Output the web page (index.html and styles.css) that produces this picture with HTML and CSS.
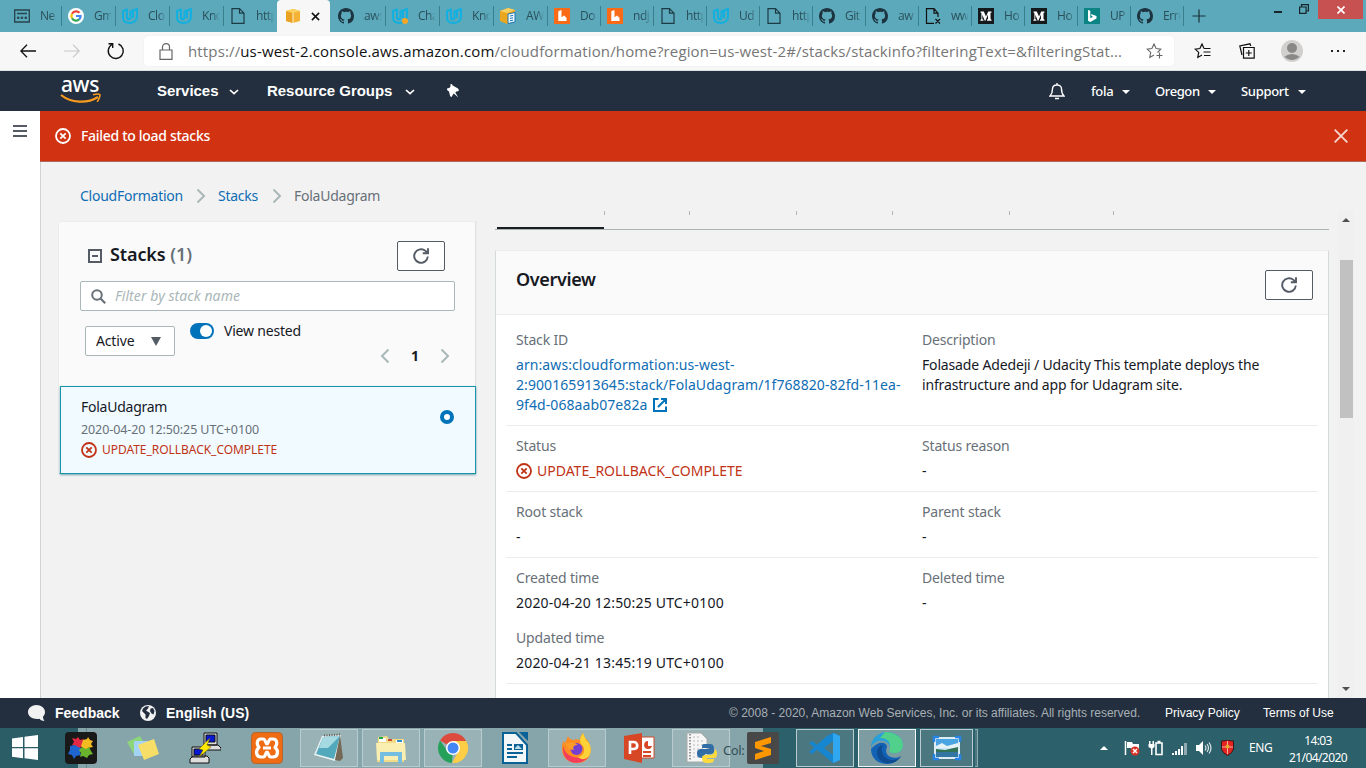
FILE: index.html
```html
<!DOCTYPE html>
<html lang="en">
<head>
<meta charset="utf-8">
<title>CloudFormation - Stack FolaUdagram</title>
<link rel="stylesheet" href="styles.css">
</head>
<body>
<svg class="defs" aria-hidden="true">
  <symbol id="github" viewBox="0 0 16 16"><path fill="#1d3440" d="M8 0C3.58 0 0 3.58 0 8c0 3.54 2.29 6.53 5.47 7.59.4.07.55-.17.55-.38 0-.19-.01-.82-.01-1.49-2.01.37-2.53-.49-2.69-.94-.09-.23-.48-.94-.82-1.13-.28-.15-.68-.52-.01-.53.63-.01 1.08.58 1.23.82.72 1.21 1.87.87 2.33.66.07-.52.28-.87.51-1.07-1.78-.2-3.64-.89-3.64-3.95 0-.87.31-1.59.82-2.15-.08-.2-.36-1.02.08-2.12 0 0 .67-.21 2.2.82A7.7 7.7 0 018 3.86c.68 0 1.36.09 2 .27 1.53-1.04 2.2-.82 2.2-.82.44 1.1.16 1.92.08 2.12.51.56.82 1.27.82 2.15 0 3.07-1.87 3.75-3.65 3.95.29.25.54.73.54 1.48 0 1.07-.01 1.93-.01 2.2 0 .21.15.46.55.38A8 8 0 0016 8c0-4.42-3.58-8-8-8z"/></symbol>
  <symbol id="page" viewBox="0 0 16 16"><path fill="none" stroke="#1d3b45" stroke-width="1.2" d="M2 .7h7.5L14 5.200V15.300H2zM9.500.7v4.500H14"/></symbol>
  <symbol id="udacity" viewBox="0 0 16 16"><path fill="none" stroke="#12b0e0" stroke-width="2" stroke-linejoin="round" d="M1 3l4-1.500V9c0 3 3.500 3 3.500 0V3.500L15 1v7.500c0 4.500-4 6.500-7.500 6.500C3.500 15 1 13 1 9.500zM11 3v7"/></symbol>
  <symbol id="lucid" viewBox="0 0 16 16"><path fill="#fa6b18" d="M0 0h16v16H0z"/><path fill="#fff" d="M4.300 3.300L7.500 2v7.200l2.500-1.700 2.500 2.200v3.300H4.300z"/></symbol>
  <symbol id="medium" viewBox="0 0 16 16"><path fill="#14191b" d="M0 0h16v16H0z"/><path fill="#fff" d="M2.500 3.500h3.300L8 8.500l2.200-5h3.300v1l-1 .6v6l1 .6v1H9v-1l1-.6V6.500l-2.600 6.200h-.6L4.300 6.700V11l1.100 1v.7h-3V12l1-1V5l-.9-.6z"/></symbol>
  <symbol id="failed" viewBox="0 0 16 16"><g fill="none" stroke="currentColor" stroke-width="1.800"><circle cx="8" cy="8" r="7"/><path d="M5.300 5.300l5.400 5.400M10.700 5.300l-5.400 5.400"/></g></symbol>
  <symbol id="refresh" viewBox="0 0 16 16"><path fill="none" stroke="#545b64" stroke-width="1.900" d="M14.800 8.500A6.800 6.800 0 1 1 12.500 2.900l2 2M15 .3v5H9.800"/></symbol>
  <symbol id="chev" viewBox="0 0 10 16"><path fill="none" stroke="#aab7b8" stroke-width="2" d="M1.500 1.500L8 8l-6.500 6.500"/></symbol>
  <symbol id="caret" viewBox="0 0 10 6"><path fill="none" stroke="#fff" stroke-width="1.700" d="M1 1l4 3.700L9 1"/></symbol>
  <symbol id="star" viewBox="0 0 18 16"><path fill="none" stroke="currentColor" stroke-width="1.100" d="M11.500 9.500l3.300-3.400-4.700-.6L8 1 5.900 5.500l-4.700.6 3.500 3.300-.9 5L8 12"/></symbol>
</svg>
<div class="screen">
  <header class="tabs">
    <div class="tab"><svg class="fav" viewBox="0 0 16 16"><path fill="none" stroke="#27434c" stroke-width="1.300" d="M.7 2h14.600v12H.7zM3 5.500h10"/><path fill="none" stroke="#27434c" d="M3.500 9h1.500v1.500H3.500zM7.200 9h1.500v1.500H7.200zM11 9h1.500v1.500H11z"/></svg><span>Ne</span></div>
    <div class="tab"><svg class="fav" viewBox="0 0 16 16"><circle cx="8" cy="8" r="8" fill="#fff"/><g fill="none" stroke-width="2.200"><path stroke="#ea4335" d="M4 5.800a4.600 4.600 0 0 1 7.500-1"/><path stroke="#fbbc05" d="M4 10.300a4.600 4.600 0 0 1 0-4.500"/><path stroke="#34a853" d="M11.300 11.300A4.600 4.600 0 0 1 4 10.300"/><path stroke="#4285f4" d="M8 8h4.600a4.600 4.600 0 0 1-1.400 3.400"/></g></svg><span>Gm</span></div>
    <div class="tab"><svg class="fav"><use href="#udacity"/></svg><span>Clo</span></div>
    <div class="tab"><svg class="fav"><use href="#udacity"/></svg><span>Kno</span></div>
    <div class="tab"><svg class="fav"><use href="#page"/></svg><span>http</span></div>
    <div class="tab active"><svg class="fav" viewBox="0 0 16 16"><path fill="#f5b335" d="M1 3l7-2 7 2v10l-7 2-7-2z"/><path fill="#e9a224" d="M1 3l7 2v10l-7-2z"/><path fill="#fbd05c" d="M1 3l7-2 7 2-7 2z"/><path stroke="#fff3d0" d="M8 5v10"/></svg><svg class="x" viewBox="0 0 10 10"><path stroke="#111" stroke-width="1.700" d="M1 1l8 8M9 1L1 9"/></svg></div>
    <div class="tab"><svg class="fav"><use href="#github"/></svg><span>aws</span></div>
    <div class="tab"><svg class="fav" viewBox="0 0 16 16"><use href="#udacity"/><circle cx="13" cy="13" r="3" fill="#f5a623"/></svg><span>Cha</span></div>
    <div class="tab"><svg class="fav"><use href="#udacity"/></svg><span>Kno</span></div>
    <div class="tab"><svg class="fav" viewBox="0 0 16 16"><path fill="#e9a820" d="M0 3l8-3 7 2v11l-8 3-7-3z"/><path fill="#f9cf60" d="M0 3l8-3 7 2-8 3z"/><path fill="#eef8ff" stroke="#1b76b5" d="M8 6l7-1.500v9.500L8 15.500z"/><path stroke="#1b76b5" d="M10 8l3-.6M10 10.400l3-.6M10 12.800l3-.6"/></svg><span>AW</span></div>
    <div class="tab short"><svg class="fav"><use href="#lucid"/></svg><span>Do</span></div>
    <div class="tab short"><svg class="fav"><use href="#lucid"/></svg><span>ndj</span></div>
    <div class="tab short"><svg class="fav"><use href="#page"/></svg><span>http</span></div>
    <div class="tab short"><svg class="fav"><use href="#udacity"/></svg><span>Ud</span></div>
    <div class="tab short"><svg class="fav"><use href="#page"/></svg><span>http</span></div>
    <div class="tab short"><svg class="fav"><use href="#github"/></svg><span>Git</span></div>
    <div class="tab short"><svg class="fav"><use href="#github"/></svg><span>aw</span></div>
    <div class="tab short"><svg class="fav" viewBox="0 0 16 16"><path fill="none" stroke="#111" stroke-width="1.200" d="M9 15.300H1.500V.7H9l4 4.500V9M9 .7v4.500h4M10.500 11l4.500 4.500M15 11l-4.500 4.500"/></svg><span>ww</span></div>
    <div class="tab short"><svg class="fav"><use href="#medium"/></svg><span>Ho</span></div>
    <div class="tab short"><svg class="fav"><use href="#medium"/></svg><span>Ho</span></div>
    <div class="tab short"><svg class="fav" viewBox="0 0 16 16"><path fill="#0c8484" d="M0 0h16v16H0z"/><path fill="#fff" d="M4 2l2.300.8v7.400l2.700-1.500-1.400-.7-.8-2L12.500 8v2.500L6.300 14 4 12.700z"/></svg><span>UP</span></div>
    <div class="tab short"><svg class="fav"><use href="#github"/></svg><span>Erro</span></div>
    <svg class="plus" viewBox="0 0 14 14"><path stroke="#1b3138" stroke-width="1.200" d="M7 .5v13M.5 7h13"/></svg>
    <div class="win">
      <svg class="min" viewBox="0 0 8 2"><path fill="#16262b" d="M0 0h8v2H0z"/></svg>
      <svg class="max" viewBox="0 0 10 10"><path fill="none" stroke="#16262b" stroke-width="1.200" d="M.6 3h6.500v6.400H.6zM2.500 3V.7h6.900V7H7"/></svg>
      <div class="close"><svg viewBox="0 0 8 8"><path stroke="#fff" stroke-width="1.700" d="M.5.5l7 7M7.500.5l-7 7"/></svg></div>
    </div>
  </header>

  <div class="toolbar">
    <svg class="back" viewBox="0 0 16 14"><path fill="none" stroke="#111" stroke-width="1.300" d="M16 7H1M7 .7L.8 7 7 13.300"/></svg>
    <svg class="fwd" viewBox="0 0 16 14"><path fill="none" stroke="#c9c9c9" stroke-width="1.200" d="M0 7h15M9 .7L15.200 7 9 13.300"/></svg>
    <svg class="reload" viewBox="0 0 18 18"><path fill="none" stroke="#111" stroke-width="1.400" d="M11.500 2A7.500 7.500 0 1 1 5 2.500M1.500 1.800h4.200V6"/></svg>
    <div class="address">
      <svg class="lock" viewBox="0 0 14 17"><path fill="none" stroke="#666" stroke-width="1.200" d="M1 7h12v9.300H1zM3.500 7V4a3.500 3.300 0 0 1 7 0v3"/></svg>
      <span class="url">https://<b>us-west-2.console.aws.amazon.com</b>/cloudformation/home?region=us-west-2#/stacks/stackinfo?filteringText=&amp;filteringStat...</span>
      <svg class="fav-add" viewBox="0 0 18 16"><use href="#star" width="18" height="16"/><path stroke="currentColor" stroke-width="1.100" d="M10.500 12.500h6M13.500 9.500v6"/></svg>
    </div>
    <svg class="favs" viewBox="0 0 18 16"><path fill="none" stroke="#111" stroke-width="1.200" d="M10 5.500L8 1 5.900 5.500l-4.700.6 3.500 3.300-.9 5L8 12M10 5.500h6.500M9.500 9h7M10 12.500h6.500"/></svg>
    <svg class="coll" viewBox="0 0 16 16"><path fill="none" stroke="#111" stroke-width="1.200" d="M4.500 4.500h10.700v10.700H4.500zM3 12L.8 3 11 .8l.8 2.200M9.800 7v6M6.800 10h6"/></svg>
    <svg class="avatar" viewBox="0 0 22 22"><circle cx="11" cy="11" r="11" fill="#d2d0ce"/><circle cx="11" cy="8" r="5" fill="#8a8886"/><path fill="#8a8886" d="M3.500 16.500q7.500-5 15 0A10 10 0 0 1 3.500 16.500z"/></svg>
    <svg class="dots" viewBox="0 0 14 2"><path fill="#222" d="M0 0h2v2H0zM6 0h2v2H6zM12 0h2v2h-2z"/></svg>
  </div>

  <nav class="awsnav">
    <div class="logo"><span>aws</span><svg viewBox="0 0 42 11"><path fill="none" stroke="#f79a1f" stroke-width="2.200" d="M1 2c10 8 26 9 37 2"/><path fill="none" stroke="#f79a1f" stroke-width="1.600" d="M33 1.800c4-1 7-1 7 0s-1 5-3 7"/></svg></div>
    <div class="main services">Services<svg><use href="#caret"/></svg></div>
    <div class="main groups">Resource Groups<svg><use href="#caret"/></svg></div>
    <svg class="pin" viewBox="0 0 12 14"><path fill="#fff" d="M3.500 0L5 .3l.7 1.300 5.300 2.800 1 1.800-1 1-1.700.2-1 1.200 3 5-4.500-4-1.200 1.500L5 12.600l-.9.400-1-1L2 7.500 0 6l.3-1.700 2-.3 1.200-1.500z"/></svg>
    <svg class="bell" viewBox="0 0 16 17"><path fill="none" stroke="#fff" stroke-width="1.400" d="M1 13c2-2 2.500-4 2.500-7C3.500 3.500 5.500 2 8 2s4.500 1.500 4.500 4c0 3 .5 5 2.500 7zM8 0v2M6 15.500h4"/></svg>
    <div class="menu m1">fola<i></i></div>
    <div class="menu m2">Oregon<i></i></div>
    <div class="menu m3">Support<i></i></div>
  </nav>

  <div class="workspace">
    <aside class="rail"><svg viewBox="0 0 14 12"><path fill="#545b64" d="M0 0h14v2H0zM0 5h14v2H0zM0 10h14v2H0z"/></svg></aside>
    <div class="console">
      <div class="flash"><svg class="ic"><use href="#failed"/></svg><span>Failed to load stacks</span><svg class="dismiss" viewBox="0 0 14 14"><path stroke="#f6d5cf" stroke-width="1.900" d="M.7.7l12.600 12.600M13.300.7L.7 13.300"/></svg></div>
      <div class="crumbs"><a class="c1">CloudFormation</a><svg><use href="#chev"/></svg><a class="c2">Stacks</a><svg><use href="#chev"/></svg><span>FolaUdagram</span></div>
      <div class="split">
        <section class="stacks">
          <div class="stacks-head"><svg class="box" viewBox="0 0 14 14"><path fill="none" stroke="#545b64" stroke-width="2" d="M1 1h12v12H1zM4 7h6"/></svg><h2>Stacks <em>(1)</em></h2><button class="btn"><svg><use href="#refresh"/></svg></button></div>
          <div class="search"><svg viewBox="0 0 15 15"><circle cx="6" cy="6" r="4.800" fill="none" stroke="#687078" stroke-width="2"/><path stroke="#687078" stroke-width="2.200" d="M9.500 9.500l4.700 4.700"/></svg><span>Filter by stack name</span></div>
          <div class="filters">
            <div class="select"><span>Active</span><i></i></div>
            <div class="toggle"><b></b></div>
            <span class="nested">View nested</span>
            <div class="pager"><svg class="prev"><use href="#chev"/></svg><b>1</b><svg><use href="#chev"/></svg></div>
          </div>
          <div class="stack">
            <div class="stack-info">
              <div class="name">FolaUdagram</div>
              <div class="time">2020-04-20 12:50:25 UTC+0100</div>
              <div class="fail"><svg class="ic"><use href="#failed"/></svg><span>UPDATE_ROLLBACK_COMPLETE</span></div>
            </div>
            <div class="radio"></div>
          </div>
        </section>
        <section class="detail">
          <div class="tabline"><i class="t1"></i><i class="t2"></i><i class="t3"></i><i class="t4"></i><i class="t5"></i><i class="t6"></i></div>
          <div class="card">
            <div class="card-head"><h2>Overview</h2><button class="btn"><svg><use href="#refresh"/></svg></button></div>
            <div class="rows">
              <div class="row first"><div><label>Stack ID</label><p class="arn"><a>arn:aws:cloudformation:us-west-<br>2:900165913645:stack/FolaUdagram/1f768820-82fd-11ea-<br>9f4d-068aab07e82a</a><svg viewBox="0 0 14 14"><path fill="none" stroke="#0073bb" stroke-width="2" d="M5.500 1H1v12h12V8.500M8 1h5v5M13 1L5 9"/></svg></p></div><div><label>Description</label><p class="desc">Folasade Adedeji / Udacity This template deploys the<br>infrastructure and app for Udagram site.</p></div></div>
              <div class="row"><div><label>Status</label><p class="fail"><svg class="ic"><use href="#failed"/></svg><span>UPDATE_ROLLBACK_COMPLETE</span></p></div><div><label>Status reason</label><p>-</p></div></div>
              <div class="row"><div><label>Root stack</label><p>-</p></div><div><label>Parent stack</label><p>-</p></div></div>
              <div class="row"><div><label>Created time</label><p class="stamp">2020-04-20 12:50:25 UTC+0100</p><label class="upd">Updated time</label><p class="stamp">2020-04-21 13:45:19 UTC+0100</p></div><div><label>Deleted time</label><p>-</p></div></div>
            </div>
          </div>
        </section>
        <div class="scroll"><i class="up"></i><div class="thumb"></div><i class="down"></i></div>
      </div>
    </div>
  </div>

  <footer class="foot">
    <svg class="bubble" viewBox="0 0 17 16"><path fill="#f2f2f2" d="M8.500 0C13 0 17 3 17 7c0 2-1 3.500-2 4.500 0 2 .5 3 1.500 4.500-2 0-4-1-5-2.300-5 1-11.500-1-11.500-6.700C0 3 4 0 8.500 0z"/></svg><b class="fb">Feedback</b>
    <svg class="globe" viewBox="0 0 16 16"><circle cx="8" cy="8" r="8" fill="#f2f2f2"/><path fill="#232f3e" d="M5.500 1.500L9 1 8 3.500 6 5.500l1.500 1L10 8l-1 3-2 3-1.500-1V9.500L2 6l1-2.500zM10.500 3.500L13 3l1.500 3-1 3.500-2-1L10 6z"/></svg><b class="en">English (US)</b>
    <span class="copy">© 2008 - 2020, Amazon Web Services, Inc. or its affiliates. All rights reserved.</span>
    <span class="pp">Privacy Policy</span><span class="tou">Terms of Use</span>
  </footer>

  <div class="taskbar">
    <span class="ghost">Col:</span>
    <div class="start"><svg viewBox="0 0 26 25"><path fill="#fff" d="M0 3.500L11 2v10H0zM12.500 1.800L26 0v12H12.500zM0 13.300h11v10L0 21.800zM12.500 13.300H26V25l-13.500-1.800z"/></svg></div>
    <div class="app"><svg viewBox="0 0 32 32"><rect width="32" height="32" rx="4" fill="#191919"/><path fill="#e22845" d="M7 6l4 1 2-2 2 3 4-1-1 4 2 3-4 1-3 3-2-4-4-1 2-3z"/><path fill="#f2bb20" d="M18 8l4-1 1-2 2 3 3 1-2 3 2 3-5 1-2 3-3-3-2-2z"/><path fill="#1e65cf" d="M5 14l5-1 3 2 3 1-1 4 1 3-5 1-2 3-2-4-4-1 2-4z"/><path fill="#6ab42d" d="M17 15l4 2 3-2 2 4 2 3-4 1-2 3-4-2-3 1 1-4-2-3z"/></svg></div>
    <div class="app"><svg viewBox="0 0 32 32"><path fill="#8cd578" d="M0 10L13 4l5 9-10 11z"/><path fill="#a5d3f5" d="M7 9h14v15H7z"/><path fill="#f7df67" d="M11 13l16-6 5 15-15 6z"/></svg></div>
    <div class="app"><svg viewBox="0 0 32 32"><g stroke="#111"><path fill="#ddd" d="M15 1h13v12H15zM14 13h15l3 3v2H14zM3 15h13v10H3zM1 27l3-3h14l2 2v5H1z"/><path fill="#0717d2" d="M17 3h9v7h-9zM5 17h9v6H5z"/></g><path fill="#ffe900" stroke="#665a00" stroke-width=".5" d="M21 6L10 17l4 1-4 7 12-10-4-2z"/></svg></div>
    <div class="app"><svg viewBox="0 0 32 32"><rect x=".5" y=".5" width="31" height="31" rx="4" fill="#ef6c14" stroke="#b6662d"/><path fill="none" stroke="#fff" stroke-width="3.200" stroke-linejoin="round" d="M10 7h2.500c2 0 2 5 3.500 5s1.500-5 3.500-5H22c4 0 5 5 2 8.500 4 3 3 9.500-2 9.500h-2.500c-2 0-2-5-3.500-5s-1.500 5-3.500 5H10c-5 0-6-6.500-2-9.500C5 12 6 7 10 7zM12 16h8"/></svg></div>
    <div class="app open"><svg viewBox="0 0 32 32"><path fill="#eef3f3" d="M9 4l19-1-6 26L1 23z"/><path fill="#52a9bb" d="M10 5l17-1-6 23L3 22z"/><path fill="#a5dae2" d="M10 5l17-1-12 12L6 16z"/><path fill="#756a57" d="M27 3l3 23-3 3-5-1z"/><path stroke="#665f55" stroke-width="2" stroke-dasharray="1 1.500" d="M11 3.500l17-1"/></svg></div>
    <div class="app open"><svg viewBox="0 0 32 32"><path fill="#f2db86" d="M3 5l9-1 2 3h15v23H2z"/><path fill="#fff" d="M4 6h7v4H4zM21 8h7v3h-7z"/><path fill="#23a84a" d="M4 5h4v2H4z"/><path fill="#cd4a35" d="M13 7h4v2h-4z"/><path fill="#328fc8" d="M22 8h5v2h-5z"/><path fill="#fbeeb1" d="M1 11h29l1 17H2z"/><path fill="none" stroke="#75bde1" stroke-width="4" d="M7 31V22h18v9"/></svg></div>
    <div class="app open"><svg viewBox="0 0 32 32"><path fill="#dd4b3e" d="M16 16L3 8.500a15 15 0 0 1 26 0z"/><path fill="#25a15a" d="M16 16l-1 15A15 15 0 0 1 3 8.500l7 10z"/><path fill="#fdcd45" d="M16 16V9h13.300A15 15 0 0 1 15 31l6-11z"/><circle cx="16" cy="16" r="7" fill="#fff"/><circle cx="16" cy="16" r="5.500" fill="#4386f5"/></svg></div>
    <div class="app"><svg viewBox="0 0 32 32"><path fill="#f4f7f8" stroke="#0b6296" stroke-width="2" d="M4 1h13l11 12v18H4z"/><path fill="#0b6296" d="M20 0h9v9zM8 12h5v2H8zM8 16h5v2H8zM8 20h16v2H8zM8 24h10v2H8zM15 12h9v6h-9z"/><path fill="#b8dce8" d="M16 16l3-3 4 4h-7z"/></svg></div>
    <div class="app open"><svg viewBox="0 0 32 32"><path fill="#ff8c22" d="M2 9l2 2 3-7c1 3 3 3 5 4 3-1 5-1 7 0 0-3 1-5 3-7l2 5c9 6 8 25-8 25C2 31-1 19 2 9z"/><path fill="#f43e5c" d="M2 14c3 12 15 14 26 9-5 12-28 11-26-9z"/><path fill="#ffd338" d="M22 1l3 7c4 3 6 8 4 14-2 5-8 7-12 3 7-1 8-10 3-13-2-4 0-8 2-11z"/><circle cx="15.500" cy="17" r="6" fill="#7540d0"/><path fill="#ff9b28" d="M3 11c5 1 6-1 9-1l5 3c-4 0-6 2-4 5-5 0-7-3-10-7z"/></svg></div>
    <div class="app"><svg viewBox="0 0 32 32"><path fill="#fff" stroke="#cc4c2b" d="M18 5h13v21H18z"/><path fill="#d74726" d="M1 4l18-3v30L1 27z"/><path fill="none" stroke="#fff" stroke-width="2.600" d="M7 22V10h3.500c5 0 5 7 0 7H7"/><path fill="#d74726" d="M25 9v5h4a4 4 0 1 1-4-5zM20 19h8v2h-8zM20 23h8v2h-8z"/></svg></div>
    <div class="app open"><svg viewBox="0 0 32 32"><path fill="#f6f6f6" stroke="#aaa" d="M2 1h14l6 6v23H2z"/><path stroke="#777" stroke-width="1.500" stroke-dasharray="1.500 1.500" d="M5 2v27"/><path stroke="#bbb" stroke-dasharray="2 2" d="M9 4v24M13 4v24M17 8v20"/><path fill="#326da5" d="M19 12h6c4 0 4 3 4 7 0 3-3 3-7 3-3 0-3 2-3 4-6 0-7-1-7-5s3-4 5-4h7v-1h-7c0-2 0-4 2-4z"/><path fill="#ffda3c" d="M30 17c3 2 3 9-1 9h-7v1h7c0 3-1 4-6 4-4 0-6-1-6-5 0-3 2-3 6-3 6 0 6-2 7-6z"/></svg></div>
    <div class="app"><svg viewBox="0 0 32 32"><rect width="32" height="32" rx="2" fill="#484848"/><path fill="#ff9800" d="M24 5v6l-10 3 10 3v6L8 28v-6l9-3-9-3v-6z"/></svg></div>
    <div class="app open"><svg viewBox="0 0 32 32"><path fill="#1786d1" d="M24 1l7 3v24l-7 3L9 17l-6 5-3-2 18-16zM0 11l3-2 21 16v6z"/><path fill="#30a8f1" d="M24 1l7 3v24l-7 3z"/><path fill="#4d7983" d="M24 9v14l-9-7z"/></svg></div>
    <div class="app open focus"><svg viewBox="0 0 32 32"><path fill="#1262b5" d="M16 1C6 1 0 9 0 17c0 9 7 15 16 15 6 0 11-3 14-8-8 5-18-1-14-9 0-5-8-7-16 2C1 8 7 1 16 1z"/><path fill="#2b9fd8" d="M0 15C0 7 7 0 16 0c9 0 16 6 16 13 0 6-5 9-11 8-4-1-2-2-2-5C19 8 6 5 0 15z"/><path fill="#50d08a" d="M14 0c11 0 18 6 18 13 0 6-5 9-11 8-4-1-2-2-2-5C20 8 14 6 9 6z"/><path fill="#0f4b91" d="M12 13c-4 7 2 15 10 15 3 0 5-1 8-4-4 7-12 9-18 6-9-5-7-16 0-17z"/></svg></div>
    <div class="app open last"><svg viewBox="0 0 32 32"><path fill="#cae8fa" stroke="#dcecf5" stroke-width="2" d="M4 6h24v20H4z"/><path fill="#4ba4e2" d="M5 7h22v8H5z"/><path fill="#e4f2f7" d="M5 14l6-3 5 3 11-3v5H5z"/><path fill="#327256" d="M5 17l9 1 13-3v5H5z"/><path fill="#3476a2" d="M5 20h22v5H5z"/><path fill="none" stroke="#2784e4" stroke-width="2.500" d="M3 10V5h5M24 5h5v5M3 22v5h5M24 27h5v-5"/></svg></div>
    <div class="edge"></div>
    <div class="tray">
      <svg class="tri" viewBox="0 0 8 4"><path fill="#fff" d="M4 0l4 4H0z"/></svg>
      <svg class="flag" viewBox="0 0 16 16"><path stroke="#fff" stroke-width="1.500" d="M1.500 1v14"/><path fill="#fff" d="M3 2h5l1 2h6v6H8L7 8H3z"/><circle cx="11" cy="11" r="4.500" fill="#d83325"/><path stroke="#fff" stroke-width="1.500" d="M9 9l4 4M13 9l-4 4"/></svg>
      <svg class="power" viewBox="0 0 16 16"><path fill="none" stroke="#fff" stroke-width="1.600" d="M8 3h6v11.500H8zM9.500 1.500h3"/><path fill="#fff" d="M1 1h1.500v3h2V1H6v3h.5v3L4.500 8.500V15H3V8.500L.5 7V4H1z"/></svg>
      <svg class="net" viewBox="0 0 16 14"><path fill="#fff" d="M0 12h2v2H0zM3 10h2v4H3zM6 8h2v6H6zM9 5h2v9H9z"/><path fill="#8fa9ae" d="M12 2h3v12h-3z"/></svg>
      <svg class="vol" viewBox="0 0 16 14"><path fill="#fff" d="M0 4h3l4-4v14l-4-4H0z"/><path fill="none" stroke="#dce7e9" stroke-width="1.200" d="M9 4.500q2 2.500 0 5M11 3q3 4 0 8M13 1.500q4 5.500 0 11"/></svg>
      <svg class="shield" viewBox="0 0 13 16"><path fill="#e32420" stroke="#341a1a" d="M.5 1q3 0 6-1 3 1 6 1v8q-1 4-6 6.500Q1.500 13 .5 9z"/><path stroke="#f0b0a8" d="M6.500 1v13M1 7h11"/><circle cx="6.500" cy="6.500" r="2" fill="#e7a729"/></svg>
      <span class="eng">ENG</span>
      <div class="clock"><span>14:03</span><span>21/04/2020</span></div>
    </div>
  </div>
</div>
</body>
</html>
```
FILE: styles.css
```css
* { box-sizing: border-box; }
body { margin: 0; font: 14px/20px "Noto Sans", sans-serif; color: #16191f; }
.defs { position: absolute; width: 0; height: 0; }
.screen { width: 1366px; height: 768px; overflow: hidden; display: flex; flex-direction: column; background: #f2f2f2; }
svg { display: block; flex: none; }
h2, p { margin: 0; }

.tabs { height: 32px; flex: none; display: flex; background: #5ba9bb; padding-left: 8px; }
.tab { width: 54px; flex: none; height: 32px; display: flex; align-items: center; padding-left: 6px; background: linear-gradient(#3a7f8e, #3a7f8e) right 6px / 1px 20px no-repeat; }
.tab.short { width: 53px; }
.tab span { width: 20px; margin-left: 10px; font: 12px/20px "Open Sans", sans-serif; letter-spacing: -.45px; color: #2b4f5a; white-space: nowrap; -webkit-mask-image: linear-gradient(90deg, #000 55%, transparent 90%); }
.fav { width: 16px; height: 16px; }
.tab.active { background: #f7f7f7; border-radius: 4px 4px 0 0; margin-left: -1px; width: 53px; margin-right: 2px; padding-left: 8px; }
.x { width: 9px; height: 9px; margin-left: 10px; }
.plus { width: 14px; height: 14px; margin: 9px 0 0 8px; }
.win { margin-left: auto; display: flex; padding-right: 3px; }
.min { width: 8px; height: 2px; margin: 11px 17px 0 0; }
.max { width: 10px; height: 10px; margin: 4px 9px 0 0; }
.close { width: 45px; height: 19px; background: #c75050; display: grid; place-items: center; }
.close svg { width: 8px; height: 8px; }

.toolbar { height: 39px; flex: none; background: #f7f7f7; display: flex; align-items: center; border-bottom: 1px solid #dde1e3; }
.back { width: 16px; height: 14px; margin-left: 20px; }
.fwd { width: 16px; height: 14px; margin-left: 28px; }
.reload { width: 18px; height: 18px; margin-left: 27px; }
.address { width: 1030px; height: 30px; margin-left: 19px; background: #fff; border-radius: 4px; display: flex; align-items: center; padding-left: 15px; box-shadow: 0 0 1px #ddd; }
.lock { width: 14px; height: 17px; margin-right: 15px; }
.url { font: 15px/22px "Open Sans", sans-serif; color: #767676; width: 935px; white-space: nowrap; letter-spacing: .14px; }
.url b { font-weight: 400; color: #111; }
.fav-add { width: 18px; height: 16px; margin-left: 23px; color: #666; }
.favs { width: 18px; height: 16px; margin-left: 20px; }
.coll { width: 16px; height: 16px; margin-left: 27px; }
.avatar { width: 22px; height: 22px; margin-left: 26px; }
.dots { width: 14px; height: 2px; margin-left: 28px; }

.awsnav { height: 40px; flex: none; background: #232f3e; display: flex; align-items: center; color: #fff; }
.logo { width: 42px; height: 26px; margin-left: 60px; }
.logo span { display: block; height: 15px; font: 500 21px/14px "Noto Sans", sans-serif; padding-left: 1px; margin-top: -1px; letter-spacing: -.4px; }
.logo svg { width: 42px; height: 11px; margin-top: 1px; }
.main { font: bold 15px/20px "Liberation Sans", sans-serif; display: flex; align-items: center; letter-spacing: -.03px; }
.main svg { width: 10px; height: 6px; margin-top: 2px; }
.services { width: 82px; margin-left: 55px; justify-content: space-between; }
.groups { width: 148px; margin-left: 28px; justify-content: space-between; }
.pin { width: 12px; height: 14px; margin-left: 32px; }
.bell { width: 16px; height: 17px; margin-left: 590px; }
.menu { font: 500 13px/20px "Noto Sans", sans-serif; display: flex; justify-content: space-between; align-items: center; }
.menu i { border: 4px solid transparent; border-top-color: #fff; border-bottom: 0; margin-top: 1px; }
.m1 { width: 39px; margin-left: 26px; letter-spacing: -.3px; }
.m2 { width: 61px; margin-left: 25px; letter-spacing: -.4px; }
.m3 { width: 65px; margin-left: 25px; letter-spacing: -.3px; }

.workspace { height: 587px; flex: none; display: flex; }
.rail { width: 40px; background: #fff; padding: 14px 0 0 13px; }
.rail svg { width: 14px; height: 12px; }
.console { width: 1326px; border-left: 1px solid #cfd3d4; }
.flash { width: 1326px; height: 51px; margin-left: -1px; background: #d13212; border-bottom: 1px solid #a9695b; color: #fff; display: flex; align-items: center; padding-left: 15px; font-weight: 500; letter-spacing: -.3px; }
.ic { width: 16px; height: 16px; }
.flash span { margin-left: 10px; }
.dismiss { width: 14px; height: 14px; margin: 0 18px 0 auto; }
.crumbs { height: 49px; padding: 18px 0 0 39px; display: flex; align-items: center; line-height: 16px; color: #687078; letter-spacing: -.25px; }
.crumbs a { color: #0f6db4; }
.crumbs .c1 { width: 103px; }
.crumbs .c2 { width: 41px; }
.crumbs svg { width: 10px; height: 16px; margin: 0 12px 0 13px; }
.split { height: 487px; display: flex; align-items: flex-start; }

.stacks { width: 416px; margin: 10px 0 0 19px; background: #fafafa; height: 252px; border: 1px solid #dfe2e2; border-left-color: #fafafa; border-top-color: #eaeded; box-shadow: 0 1px 1px #ccc; margin-left: 18px; padding-left: 1px; width: 417px; }
.stacks-head { display: flex; height: 59px; padding: 19px 0 0 27px; }
.box { width: 14px; height: 14px; margin-top: 8px; }
h2 { font: 600 18px/24px "Noto Sans", sans-serif; letter-spacing: -.1px; }
.stacks h2 { margin: 1px 0 0 8px; width: 100px; }
h2 em { font-style: normal; color: #687078; }
.btn { width: 48px; height: 30px; padding: 0; background: #fff; border: 1px solid #545b64; border-radius: 2px; display: grid; place-items: center; }
.btn svg { width: 16px; height: 16px; }
.stacks .btn { margin-left: auto; margin-right: 30px; }
.search { width: 375px; height: 30px; margin-left: 19px; background: #fff; border: 1px solid #aab7b8; border-radius: 2px; display: flex; align-items: center; padding-left: 10px; color: #aab7b8; font-style: italic; letter-spacing: .07px; }
.search svg { width: 15px; height: 15px; margin-right: 9px; }
.filters { display: flex; align-items: flex-start; height: 75px; padding: 15px 0 0 24px; }
.select { width: 90px; height: 30px; border: 1px solid #aab7b8; border-radius: 2px; background: #fff; display: flex; align-items: center; justify-content: space-between; padding: 0 13px 0 10px; letter-spacing: -.15px; }
.select i { border: 5.500px solid transparent; border-top: 9px solid #545b64; border-bottom: 0; }
.toggle { width: 24px; height: 16px; border-radius: 8px; background: #0073bb; margin: -3px 0 0 15px; padding: 2px 2px 0 10px; }
.toggle b { display: block; width: 12px; height: 12px; border-radius: 50%; background: #fff; }
.nested { margin: -5px 0 0 10px; letter-spacing: -.2px; }
.pager { display: flex; align-items: center; gap: 21px; margin: 20px 25px 0 auto; }
.pager svg { width: 10px; height: 16px; }
.prev { transform: scaleX(-1); }
.stack { height: 88px; width: 416px; margin-left: -1px; border: 1px solid #1c91ab; background: #f1faff; padding: 10px 21px 10px 20px; display: flex; justify-content: space-between; box-shadow: 0 1px 2px #6fa6b3; }
.name { letter-spacing: -.25px; }
.time { font-size: 12.500px; line-height: 20px; margin-top: 3px; color: #687078; white-space: nowrap; letter-spacing: -.1px; }
.fail { display: flex; align-items: center; gap: 5px; color: #c03316; }
.stack .fail { font-size: 12px; letter-spacing: -.04px; }
.radio { width: 14px; height: 14px; border: 4.500px solid #0073bb; border-radius: 50%; background: #fff; margin-top: 13px; }

.detail { width: 834px; height: 487px; margin-left: 19px; overflow: hidden; }
.tabline { height: 19px; display: flex; background: linear-gradient(#1a1d21, #1a1d21) 2px 16px / 107px 2px no-repeat, linear-gradient(#aab3b3, #aab3b3) 0 18px / 100% 1px no-repeat; }
.tabline i { height: 4px; border-right: 1px solid #b1b5b5; }
.t1 { width: 110px; } .t2 { width: 85px; } .t3 { width: 107px; } .t4 { width: 96px; } .t5 { width: 117px; } .t6 { width: 104px; }
.card { margin-top: 20px; height: 500px; background: #fff; border: 1px solid #d5dbdb; border-top-color: #eaeded; }
.card-head { height: 64px; background: #fafafa; border-bottom: 1px solid #eaeded; padding: 16px 15px 0 20px; display: flex; justify-content: space-between; }
.card-head h2 { letter-spacing: -.35px; }
.card-head .btn { margin-top: 3px; }
.rows { padding: 0 10px; }
.row { display: grid; grid-template-columns: 406px 406px; padding: 10px 0 10px 10px; border-bottom: 1px solid #eaeded; }
.row.first { padding-top: 15px; }
.row label { display: block; color: #687078; margin-bottom: 5px; letter-spacing: -.17px; }
.row .upd { margin-top: 15px; }
.row p { white-space: nowrap; }
.row .desc { letter-spacing: -.16px; }
.row .stamp { letter-spacing: .19px; }
.arn { color: #0f6db4; display: flex; align-items: flex-end; letter-spacing: .08px; }
.arn a { width: 132px; }
.arn svg { width: 14px; height: 14px; margin: 0 0 3px 5px; }
.scroll { width: 16px; height: 487px; margin-left: 9px; background: #f0f0f0; display: flex; flex-direction: column; align-items: center; }
.scroll i { border: 4px solid transparent; }
.up { margin-top: 7px; border-top: 0 !important; border-bottom-color: #505050 !important; }
.thumb { width: 13px; height: 158px; background: #c1c1c1; margin-top: 38px; }
.down { margin-top: auto; margin-bottom: 7px; border-bottom: 0 !important; border-top-color: #505050 !important; }

.foot { height: 30px; flex: none; background: #232f3e; color: #fff; display: flex; align-items: center; font: 12px/16px "Liberation Sans", sans-serif; white-space: nowrap; }
.bubble { width: 17px; height: 16px; margin-left: 28px; }
.foot b { font-size: 14px; }
.fb { margin-left: 10px; width: 85px; }
.globe { width: 16px; height: 16px; }
.en { margin-left: 10px; }
.copy { margin-left: auto; width: 412px; color: #a8afb6; }
.pp { margin-left: 24px; width: 75px; }
.tou { margin-left: 23px; width: 103px; }

.taskbar { position: relative; height: 40px; flex: none; display: flex; background: linear-gradient(90deg, #2a5d66 78px, #86a5aa 78px, #86a5aa 86px, #688990 86px, #688990 87px, #86a5aa 87px, #86a5aa 763px, #2c606a 763px); }
.ghost { position: absolute; left: 723px; top: 12px; font: 13px/20px "Noto Sans", sans-serif; letter-spacing: -.4px; color: #344f57; }
.start { width: 50px; padding: 7px 0 0 12px; }
.start svg { width: 26px; height: 25px; }
.app { width: 58px; height: 38px; margin: 1px 2px; flex: none; display: grid; place-items: center; }
.app svg { width: 32px; height: 32px; }
.app.open { border: 1px solid #b9cbce; background: rgba(255, 255, 255, .15); }
.app.open svg { margin-top: -1px; }
.app.focus { background: rgba(255, 255, 255, .38); border-color: #f1f5f5; }
.app.last { width: 53px; }
.edge { width: 3px; height: 38px; margin-top: 1px; border: 1px solid #8fa9ae; border-left: 0; background: rgba(255, 255, 255, .15); }
.tray { margin-left: auto; display: flex; align-items: center; color: #fff; padding-right: 18px; font-size: 12px; }
.tri { width: 8px; height: 4px; margin-right: 16px; }
.flag, .power { width: 16px; height: 16px; margin-right: 8px; }
.net { width: 16px; height: 14px; margin-right: 8px; }
.vol { width: 16px; height: 14px; margin-right: 9px; }
.shield { width: 13px; height: 16px; margin-right: 15px; }
.eng { width: 24px; margin-right: 15px; letter-spacing: -.4px; }
.clock { width: 60px; text-align: center; line-height: 17px; letter-spacing: -.6px; white-space: nowrap; padding-top: 1px; }
.clock span { display: block; }
```
